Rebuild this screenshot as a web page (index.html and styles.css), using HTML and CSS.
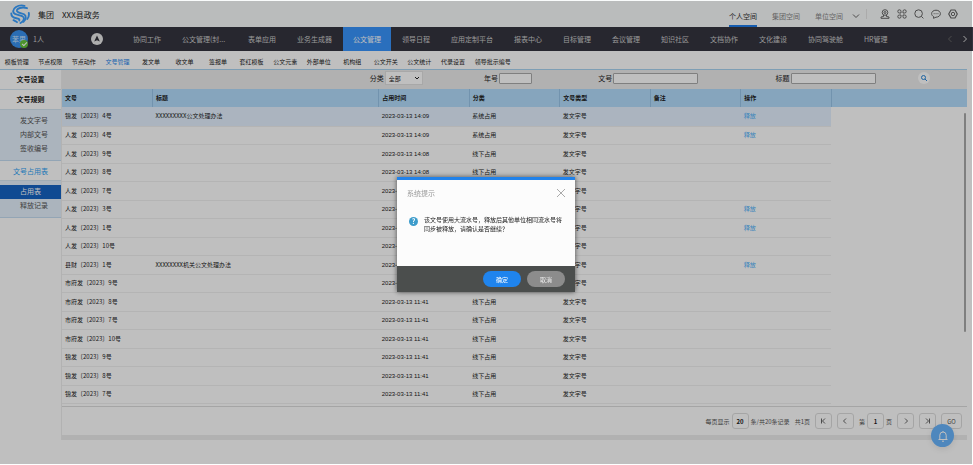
FILE: index.html
```html
<!DOCTYPE html>
<html lang="zh-CN">
<head>
  <meta charset="UTF-8" />
  <meta name="viewport" content="width=device-width, initial-scale=1.0" />
  <title>文号管理</title>
  <link rel="stylesheet" href="styles.css">
</head>
<body>
  <!-- Top bar -->
  <header class="topbar">
    <svg class="logo" viewBox="0 0 20 20">
      <g fill="none" stroke="#3a9fff" stroke-width="1.900" stroke-linecap="round">
        <path d="M14.500 1.800C8 .2 2 4.500 3.500 8.500c1 2.500 5.500 2.300 8.500 3.500 3 1.300 2.500 5-1.500 7"/>
        <path d="M17 4.200C12 2.500 6.500 4.500 7 7c.5 2 4.500 1.800 7 3.300 2.500 1.600 2.300 5.200-.5 7.500"/>
        <path d="M18.800 9c.4 2.500-.2 4.500-1.500 6"/>
        <path d="M1.300 9.500c0 3 2 4.200 5 4.700 2 .4 3.500.8 3 2.300"/>
        <path d="M3.500 16.200c1.500.8 2.500 1 3.500 2"/>
      </g>
    </svg>
    <span class="org">集团</span>
    <span class="org">XXX县政务</span>
    <nav class="spaces">
      <a href="#" class="current">个人空间</a>
      <a href="#">集团空间</a>
      <a href="#">单位空间</a>
    </nav>
    <svg class="chevron" viewBox="0 0 8 8"><path d="M1 2.500l3 3 3-3"/></svg>
    <div class="tools">
      <button type="button" aria-label="帮助">
        <svg viewBox="0 0 10 10"><circle cx="5" cy="3.500" r="2.800"/><circle cx="5" cy="3.500" r="1"/><path d="M3.500 6v1.500L1 8v1.300h8V8l-2.500-.5V6"/></svg>
      </button>
      <button type="button" aria-label="应用">
        <svg viewBox="0 0 10 10"><path d="M4 4H2.500A1.600 1.600 0 1 1 4 2.500zM6 4V2.500A1.600 1.600 0 1 1 7.500 4zM4 6v1.500A1.600 1.600 0 1 1 2.500 6zM6 6h1.500A1.600 1.600 0 1 1 6 7.500z"/></svg>
      </button>
      <button type="button" aria-label="搜索">
        <svg viewBox="0 0 10 10"><circle cx="4.600" cy="4.600" r="3.800"/><path d="M7.400 7.400l2 2"/></svg>
      </button>
      <button type="button" aria-label="消息">
        <svg viewBox="0 0 10 10"><path d="M5 1.200c2.500 0 4.400 1.500 4.400 3.500S7.500 8.200 5 8.200L2.500 9.300l.2-1.700C1.400 7 .6 5.900.6 4.700.6 2.700 2.500 1.200 5 1.200z"/><path d="M2.700 4.700h.9M4.600 4.700h.9M6.500 4.700h.9"/></svg>
      </button>
      <button type="button" aria-label="设置">
        <svg viewBox="0 0 10 10"><path d="M3 1h4l2.300 4L7 9H3L.7 5z" stroke-linejoin="round" stroke-width="1.200"/><circle cx="5" cy="5" r="1.700"/></svg>
      </button>
    </div>
  </header>

  <!-- Main navigation -->
  <nav class="mainnav">
    <div class="user">
      <span class="avatar">苯果<i class="online"></i></span>
      <span class="count">1人</span>
    </div>
    <svg class="compass" viewBox="0 0 12 12"><circle cx="6" cy="6" r="6" fill="#e8e8e8"/><path d="M6 2.500L8.800 8.500 6 7.200 3.200 8.500z" fill="#34343c"/></svg>
    <div class="menu">
      <a href="#">协同工作</a>
      <a href="#" class="long">公文管理(封...</a>
      <a href="#">表单应用</a>
      <a href="#">业务生成器</a>
      <a href="#" class="current">公文管理</a>
      <a href="#">领导日程</a>
      <a href="#">应用定制平台</a>
      <a href="#">报表中心</a>
      <a href="#">目标管理</a>
      <a href="#">会议管理</a>
      <a href="#">知识社区</a>
      <a href="#">文档协作</a>
      <a href="#">文化建设</a>
      <a href="#">协同驾驶舱</a>
      <a href="#">HR管理</a>
    </div>
    <div class="arrows">
      <svg class="off" viewBox="0 0 8 8"><path d="M5.500 1l-3 3 3 3"/></svg>
      <svg viewBox="0 0 8 8"><path d="M2.500 1l3 3-3 3"/></svg>
    </div>
  </nav>

  <!-- Tabs -->
  <nav class="tabs">
    <a href="#">模板管理</a>
    <a href="#">节点权限</a>
    <a href="#">节点动作</a>
    <a href="#" class="current">文号管理</a>
    <a href="#">发文单</a>
    <a href="#">收文单</a>
    <a href="#">签报单</a>
    <a href="#">套红模板</a>
    <a href="#">公文元素</a>
    <a href="#">外部单位</a>
    <a href="#">机构组</a>
    <a href="#">公文开关</a>
    <a href="#">公文统计</a>
    <a href="#">代录设置</a>
    <a href="#">领导批示编号</a>
  </nav>

  <div class="layout">
    <!-- Sidebar -->
    <aside class="sidebar">
      <a href="#" class="group">文号设置</a>
      <a href="#" class="group">文号规则</a>
      <div class="sub">
        <a href="#">发文字号</a>
        <a href="#">内部文号</a>
        <a href="#">签收编号</a>
      </div>
      <a href="#" class="group open">文号占用表</a>
      <div class="sub">
        <a href="#" class="current">占用表</a>
        <a href="#">释放记录</a>
      </div>
    </aside>

    <main class="content">
      <form class="filters">
        <div class="field">
          <label for="type">分类</label>
          <select id="type"><option>全部</option></select>
        </div>
        <div class="field">
          <label for="year">年号</label>
          <input type="text" id="year" class="short" />
        </div>
        <div class="field">
          <label for="number">文号</label>
          <input type="text" id="number" />
        </div>
        <div class="field">
          <label for="title">标题</label>
          <input type="text" id="title" />
        </div>
        <button type="button" class="search" aria-label="查询">
          <svg viewBox="0 0 12 12"><circle cx="5.500" cy="5.500" r="2"/><path d="M7 7l2 2"/></svg>
        </button>
      </form>

      <div class="grid">
        <table>
          <thead>
            <tr><th>文号</th><th class="wide">标题</th><th>占用时间</th><th>分类</th><th>文号类型</th><th>备注</th><th>操作</th><th class="rest"></th></tr>
          </thead>
          <tbody>
            <tr class="selected"><td>锦发〔2023〕4号</td><td>XXXXXXXXX公文处理办法</td><td>2023-03-13 14:09</td><td>系统占用</td><td>发文字号</td><td></td><td><a href="#">释放</a></td><td></td></tr>
            <tr><td>人发〔2023〕4号</td><td></td><td>2023-03-13 14:09</td><td>系统占用</td><td>发文字号</td><td></td><td><a href="#">释放</a></td><td></td></tr>
            <tr><td>人发〔2023〕9号</td><td></td><td>2023-03-13 14:08</td><td>线下占用</td><td>发文字号</td><td></td><td></td><td></td></tr>
            <tr><td>人发〔2023〕8号</td><td></td><td>2023-03-13 14:08</td><td>线下占用</td><td>发文字号</td><td></td><td></td><td></td></tr>
            <tr><td>人发〔2023〕7号</td><td></td><td>2023-03-13 14:08</td><td>线下占用</td><td>发文字号</td><td></td><td></td><td></td></tr>
            <tr><td>人发〔2023〕3号</td><td></td><td>2023-03-13 14:08</td><td>系统占用</td><td>发文字号</td><td></td><td><a href="#">释放</a></td><td></td></tr>
            <tr><td>人发〔2023〕1号</td><td></td><td>2023-03-13 14:08</td><td>系统占用</td><td>发文字号</td><td></td><td><a href="#">释放</a></td><td></td></tr>
            <tr><td>人发〔2023〕10号</td><td></td><td>2023-03-13 14:08</td><td>线下占用</td><td>发文字号</td><td></td><td></td><td></td></tr>
            <tr><td>县财〔2023〕1号</td><td>XXXXXXXX机关公文处理办法</td><td>2023-03-13 11:41</td><td>系统占用</td><td>发文字号</td><td></td><td><a href="#">释放</a></td><td></td></tr>
            <tr><td>市府发〔2023〕9号</td><td></td><td>2023-03-13 11:41</td><td>线下占用</td><td>发文字号</td><td></td><td></td><td></td></tr>
            <tr><td>市府发〔2023〕8号</td><td></td><td>2023-03-13 11:41</td><td>线下占用</td><td>发文字号</td><td></td><td></td><td></td></tr>
            <tr><td>市府发〔2023〕7号</td><td></td><td>2023-03-13 11:41</td><td>线下占用</td><td>发文字号</td><td></td><td></td><td></td></tr>
            <tr><td>市府发〔2023〕10号</td><td></td><td>2023-03-13 11:41</td><td>线下占用</td><td>发文字号</td><td></td><td></td><td></td></tr>
            <tr><td>锦发〔2023〕9号</td><td></td><td>2023-03-13 11:41</td><td>线下占用</td><td>发文字号</td><td></td><td></td><td></td></tr>
            <tr><td>锦发〔2023〕8号</td><td></td><td>2023-03-13 11:41</td><td>线下占用</td><td>发文字号</td><td></td><td></td><td></td></tr>
            <tr><td>锦发〔2023〕7号</td><td></td><td>2023-03-13 11:41</td><td>线下占用</td><td>发文字号</td><td></td><td></td><td></td></tr>
          </tbody>
        </table>
        <div class="scrollbar"></div>
      </div>

      <!-- Pagination -->
      <div class="pager">
        <label for="size">每页显示</label>
        <input type="text" id="size" value="20" />
        <span class="total">条/共20条记录</span>
        <span class="pages">共1页</span>
        <button type="button" aria-label="首页"><svg viewBox="0 0 8 8"><path d="M2.500 1.500v5M6 1.500L3.500 4 6 6.500"/></svg></button>
        <button type="button" aria-label="上一页"><svg viewBox="0 0 8 8"><path d="M5 1.500L2.500 4 5 6.500"/></svg></button>
        <label for="page">第</label>
        <input type="text" id="page" value="1" />
        <span class="unit">页</span>
        <button type="button" aria-label="下一页"><svg viewBox="0 0 8 8"><path d="M3 1.500L5.500 4 3 6.500"/></svg></button>
        <button type="button" aria-label="末页"><svg viewBox="0 0 8 8"><path d="M2 1.500L4.500 4 2 6.500M5.500 1.500v5"/></svg></button>
        <button type="button" class="go">GO</button>
      </div>
    </main>
  </div>

  <button type="button" class="bell" aria-label="通知">
    <svg viewBox="0 0 12 12"><path d="M1.500 9.500h9M2.800 9.500V5.200a3.200 3.200 0 0 1 6.400 0v4.300M5 11.200h2M6 2V1"/></svg>
  </button>

  <!-- Confirm dialog -->
  <div class="overlay">
    <div class="dialog" role="dialog" aria-labelledby="dialogTitle">
      <div class="dialog-head">
        <span id="dialogTitle">系统提示</span>
        <button type="button" class="close" aria-label="关闭">
          <svg viewBox="0 0 8 8"><path d="M0 0l8 8M8 0L0 8"/></svg>
        </button>
      </div>
      <div class="dialog-body">
        <span class="question">?</span>
        <p>该文号使用大流水号，释放后其他单位相同流水号将同步被释放，请确认是否继续？</p>
      </div>
      <div class="dialog-foot">
        <button type="button" class="ok">确定</button>
        <button type="button">取消</button>
      </div>
    </div>
  </div>
</body>
</html>
```

FILE: styles.css
```css
* {
  box-sizing: border-box;
}
body {
  margin: 0;
  font-family: "Noto Sans CJK SC", sans-serif;
  font-size: 6px;
  color: #222;
  background: #fff;
}
a {
  color: inherit;
  text-decoration: none;
}
button,
input,
select {
  font-family: inherit;
  font-size: 6px;
  color: inherit;
  margin: 0;
  padding: 0;
}
button {
  border: none;
  background: none;
  cursor: pointer;
}
svg {
  display: block;
  fill: none;
  stroke: #666;
}

/* top bar */
.topbar {
  display: flex;
  align-items: center;
  height: 27px;
  padding: 1px 15px 0 10px;
  background: #f9fbfb;
  font-size: 8px;
}
.logo {
  width: 20px;
  height: 20px;
}
.org {
  margin-left: 8px;
}
.spaces {
  display: flex;
  align-self: stretch;
  gap: 15px;
  margin-left: auto;
  font-size: 7px;
  line-height: 30px;
  color: #888;
}
.spaces .current {
  color: #333;
  border-bottom: 2px solid #1d7bea;
}
.chevron {
  width: 8px;
  height: 8px;
  margin: 4px 6px 0 9px;
}
.tools {
  display: flex;
  gap: 7px;
  padding-left: 13px;
  border-left: 1px solid #e4e4e4;
}
.tools svg {
  width: 10px;
  height: 10px;
}

/* main navigation */
.mainnav {
  display: flex;
  align-items: center;
  height: 24px;
  padding: 0 4px 0 10px;
  background: #34343f;
  color: #ccc;
  font-size: 7px;
}
.user {
  display: flex;
  align-items: center;
  gap: 5px;
  width: 81px;
}
.avatar {
  position: relative;
  width: 18px;
  height: 18px;
  border-radius: 50%;
  background: #3892f0;
  color: #cfe6ff;
  line-height: 18px;
  text-align: center;
}
.online {
  position: absolute;
  right: 0;
  bottom: 0;
  width: 8px;
  height: 8px;
  border-radius: 50%;
  background: #66c53a;
}
.online::after {
  content: "";
  position: absolute;
  left: 2px;
  top: 2px;
  width: 4px;
  height: 2px;
  border-left: 1px solid #fff;
  border-bottom: 1px solid #fff;
  transform: rotate(-45deg);
}
.compass {
  width: 12px;
  height: 12px;
  stroke: none;
}
.menu {
  display: flex;
  gap: 1px;
  margin-left: 20px;
  line-height: 24px;
  white-space: nowrap;
}
.menu a {
  padding: 0 10px;
}
.menu .long {
  width: 65px;
}
.menu .current {
  background: #3894fd;
  color: #fff;
}
.arrows {
  display: flex;
  gap: 7px;
  margin-left: auto;
}
.arrows svg {
  width: 8px;
  height: 8px;
  stroke: #ddd;
}
.arrows .off {
  stroke: #666;
}

/* tabs */
.tabs {
  display: grid;
  grid-template-columns: repeat(14, minmax(0, 1fr)) 46px;
  width: 53%;
  height: 18px;
  line-height: 22px;
  text-align: center;
  white-space: nowrap;
}
.tabs .current {
  color: #1d83ea;
  border-bottom: 1px solid #1d83ea;
}
.layout {
  display: flex;
  margin-right: 6px;
  border-top: 1px solid #a9d3f0;
}

/* sidebar */
.sidebar {
  width: 61px;
  font-size: 7px;
  color: #555;
}
.sidebar a {
  display: block;
}
.group {
  height: 20px;
  line-height: 18px;
  text-align: center;
  font-weight: bold;
  color: #222;
  border-bottom: 1px solid #d5e6f2;
}
.group.open {
  font-weight: normal;
  line-height: 20px;
  color: #2da2f5;
}
.sub {
  padding: 4px 0;
  background: #e4f0fc;
  border-bottom: 1px solid #c5dcf2;
}
.sub a {
  height: 14px;
  padding-left: 20px;
  line-height: 13px;
}
.sub .current {
  background: #1463c3;
  color: #fff;
}

/* filters */
.content {
  flex: 1;
  border-left: 1px solid #eee;
}
.filters {
  display: grid;
  grid-template-columns: 114fr 114fr 177fr 142fr 49fr;
  align-items: center;
  height: 19px;
  padding: 0 0 3px 34%;
  background: #ededed;
  font-size: 7px;
}
.field {
  display: flex;
  align-items: center;
  gap: 1px;
}
.field input {
  width: 85px;
  height: 11px;
  border: 1px solid #aaa;
  border-radius: 1px;
  background: #fff;
}
.field .short {
  width: 33px;
}
.field select {
  width: 38px;
  height: 14px;
  padding-left: 3px;
  border: 1px solid #e0e0e0;
  appearance: none;
  background: #fff url("data:image/svg+xml,%3Csvg xmlns='http://www.w3.org/2000/svg' width='6' height='6'%3E%3Cpath d='M1 2l2 2 2-2' fill='none' stroke='%23222'/%3E%3C/svg%3E") no-repeat right 2px center;
}
.search {
  width: 12px;
  height: 12px;
  border-radius: 50%;
  background: #fff;
}
.search svg {
  width: 12px;
  height: 12px;
  stroke: #2a86d8;
}

/* table */
.grid {
  position: relative;
  height: 318px;
  border-bottom: 1px solid #ddd;
}
table {
  width: 100%;
  table-layout: fixed;
  border-collapse: collapse;
}
th,
td {
  padding: 0 3px;
  text-align: left;
  line-height: 12px;
  white-space: nowrap;
}
th {
  width: 10%;
  height: 18px;
  background: #b3ddfc;
  border-right: 1px solid #98c4e8;
}
.wide {
  width: 25%;
}
.rest {
  width: 15%;
  border-right: none;
}
td {
  height: 18px;
  border-bottom: 1px solid #f1f1f1;
}
tr:nth-child(odd) td {
  height: 19px;
}
td:nth-child(3) {
  font-family: "Liberation Sans", sans-serif;
}
td:last-child {
  border-bottom: none;
}
td a {
  color: #4db0fa;
}
.selected td:not(:last-child) {
  background: #e4f1ff;
}
.scrollbar {
  position: absolute;
  right: 1px;
  top: 24px;
  width: 2px;
  height: 219px;
  border-radius: 1px;
  background: #aaa;
}

/* pagination */
.pager {
  display: flex;
  align-items: center;
  justify-content: flex-end;
  gap: 5px;
  height: 33px;
  padding-right: 5px;
  border-bottom: 5px solid #ededed;
  color: #555;
}
.pager label {
  margin-right: -3px;
}
.pager .total,
.pager .unit {
  margin-left: -3px;
}
.pager input,
.pager button {
  width: 17px;
  height: 16px;
  border: 1px solid #ddd;
  border-radius: 3px;
  text-align: center;
}
.pager input {
  background: #fff;
  color: #222;
  font-weight: bold;
}
.pager svg {
  width: 8px;
  height: 8px;
  margin: auto;
}
.pager .go {
  width: 21px;
}
.bell {
  position: fixed;
  right: 19px;
  bottom: 18px;
  width: 23px;
  height: 23px;
  border-radius: 50%;
  background: #68b4fc;
  box-shadow: 0 2px 6px rgba(0, 0, 0, 0.1);
}
.bell svg {
  width: 12px;
  height: 12px;
  margin: auto;
  stroke: #fff;
}

/* dialog */
.overlay {
  position: fixed;
  inset: 1px 1px 1px 0;
  display: flex;
  align-items: center;
  justify-content: center;
  padding-top: 4px;
  background: rgba(0, 0, 0, 0.25);
}
.dialog {
  width: 178px;
  border-top: 3px solid #2182ea;
  background: #fcfcfc;
  box-shadow: 0 0 5px rgba(0, 0, 0, 0.6);
}
.dialog-head {
  display: flex;
  align-items: center;
  justify-content: space-between;
  height: 26px;
  padding: 0 10px;
  font-size: 7px;
  color: #999;
}
.close svg {
  width: 8px;
  height: 8px;
  stroke: #aaa;
}
.dialog-body {
  display: flex;
  gap: 6px;
  height: 60px;
  padding: 9px 8px 0 12px;
}
.question {
  flex: none;
  width: 9px;
  height: 9px;
  margin-top: 2px;
  border-radius: 50%;
  background: #3d9ccb;
  color: #fff;
  font-weight: bold;
  font-size: 7px;
  line-height: 9px;
  text-align: center;
}
.dialog-body p {
  margin: 0;
  line-height: 9px;
}
.dialog-foot {
  display: flex;
  align-items: center;
  justify-content: flex-end;
  gap: 6px;
  height: 26px;
  padding-right: 10px;
  background: #4b4e4d;
}
.dialog-foot button {
  width: 38px;
  height: 16px;
  border-radius: 8px;
  background: #8c8c8c;
  color: #eee;
}
.dialog-foot .ok {
  background: #1f84ee;
  color: #fff;
}
```
